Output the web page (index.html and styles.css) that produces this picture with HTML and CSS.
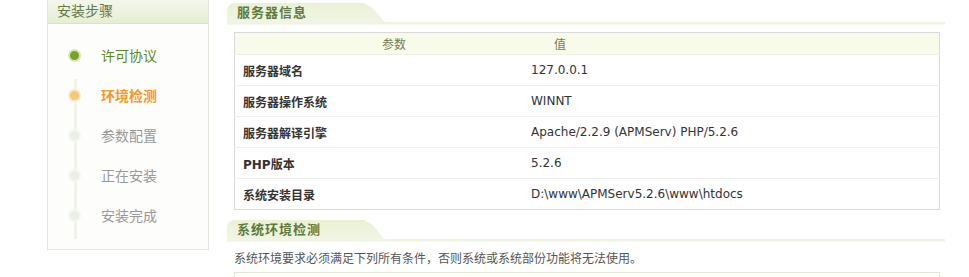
FILE: index.html
```html
<!DOCTYPE html>
<html lang="zh-CN">
<head>
    <meta charset="UTF-8">
    <title>安装向导</title>
    <link rel="stylesheet" href="styles.css">
</head>
<body>
    <div class="wrap">
        <!-- Left: install steps -->
        <div class="side">
            <div class="side-head">安装步骤</div>
            <ul class="steps">
                <li class="done"><span class="dot"></span>许可协议</li>
                <li class="current"><span class="dot"></span>环境检测</li>
                <li><span class="dot"></span>参数配置</li>
                <li><span class="dot"></span>正在安装</li>
                <li><span class="dot"></span>安装完成</li>
            </ul>
        </div>

        <!-- Right: checks -->
        <div class="main">
            <div class="sec-head"><span class="tab">服务器信息</span></div>
            <table class="info">
                <tr>
                    <th class="c1">参数</th>
                    <th class="c2">值</th>
                </tr>
                <tr><td class="k">服务器域名</td><td>127.0.0.1</td></tr>
                <tr><td class="k">服务器操作系统</td><td>WINNT</td></tr>
                <tr><td class="k">服务器解译引擎</td><td>Apache/2.2.9 (APMServ) PHP/5.2.6</td></tr>
                <tr><td class="k">PHP版本</td><td>5.2.6</td></tr>
                <tr><td class="k">系统安装目录</td><td>D:\www\APMServ5.2.6\www\htdocs</td></tr>
            </table>

            <div class="sec-head second"><span class="tab">系统环境检测</span></div>
            <p class="note">系统环境要求必须满足下列所有条件，否则系统或系统部份功能将无法使用。</p>
            <div class="box"></div>
        </div>
    </div>
</body>
</html>
```

FILE: styles.css
```css
/* Page base */
body {
    margin: 0;
    background: #fff;
    font-family: "DejaVu Sans", "Noto Sans CJK SC", sans-serif;
    font-size: 12px;
    color: #333;
}

.wrap {
    display: flex;
    align-items: flex-start;
    padding-left: 47px;
}

/* Sidebar with steps */
.side {
    width: 160px;
    border: 1px solid #e4e8df;
    border-top: none;
    background: #fdfdfc;
}

.side-head {
    height: 23px;
    line-height: 23px;
    padding-left: 9px;
    font-size: 14px;
    color: #627a4a;
    background: linear-gradient(#f4f7ec, #e6edd3);
    border-bottom: 1px solid #dbe3c6;
}

.steps {
    position: relative;
    list-style: none;
    margin: 0;
    padding: 11px 0 14px 0;
}

/* connecting line behind the dots */
.steps::before {
    content: "";
    position: absolute;
    left: 26px;
    top: 55px;
    height: 160px;
    width: 3px;
    background: #f0f3eb;
}

.steps li {
    display: flex;
    align-items: center;
    height: 40px;
    padding-left: 20px;
    font-size: 14px;
    color: #999;
}

.dot {
    position: relative;
    width: 9px;
    height: 9px;
    margin-right: 20px;
    border-radius: 50%;
    background: #ebefe5;
    border: 2px solid #f4f6f0;
}

.steps li.done {
    color: #5d8a22;
}

.steps li.done .dot {
    background: #78a32a;
    border-color: #d6e6b6;
}

.steps li.current {
    color: #f39a1e;
    font-weight: bold;
}

.steps li.current .dot {
    background: #f8c777;
    border-color: #fde9c8;
}

/* Main column */
.main {
    width: 718px;
    margin-left: 18px;
}

.sec-head {
    margin-top: 3px;
    height: 19px;
    border-bottom: 2px solid #eff3e3;
    box-shadow: 0 1px 1px #f6f8ee;
}

.sec-head.second {
    margin-top: 10px;
}

.tab {
    position: relative;
    display: inline-block;
    width: 128px;
    height: 20px;
    line-height: 20px;
    padding-left: 10px;
    font-size: 13px;
    font-weight: bold;
    letter-spacing: 1px;
    color: #5e7a3c;
    background: linear-gradient(#eaf1d7, #f1f5e4);
    border-radius: 8px 0 0 0;
}

/* slanted right edge of the tab */
.tab::after {
    content: "";
    position: absolute;
    top: 0;
    right: -12px;
    width: 24px;
    height: 20px;
    background: linear-gradient(#eaf1d7, #f1f5e4);
    transform: skewX(40deg);
    border-radius: 0 8px 0 0;
}

/* Server info table */
.info {
    width: 706px;
    margin: 8px 0 0 7px;
    border: 1px solid #dadada;
    border-collapse: collapse;
}

.info th {
    height: 21px;
    padding: 0;
    font-weight: normal;
    font-size: 12px;
    color: #6f7f55;
    background: #f9fbea;
    border-bottom: 1px solid #eef0e0;
}

.info th.c1 {
    width: 258px;
    padding-left: 30px;
    text-align: center;
}

.info th.c2 {
    text-align: left;
    padding-left: 31px;
}

.info td {
    height: 30px;
    padding: 0 0 0 8px;
    border-bottom: 1px solid #f0f0f0;
    color: #333;
}

.info td.k {
    font-weight: bold;
}

.info tr:last-child td {
    border-bottom: none;
}

.note {
    margin: 11px 0 0 7px;
    line-height: 14px;
    color: #555;
}

.box {
    margin: 6px 5px 0 7px;
    height: 20px;
    border: 1px solid #e4e7cf;
    border-bottom: none;
}
```
